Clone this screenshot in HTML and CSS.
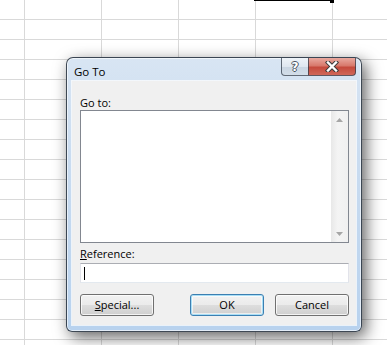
FILE: index.html
```html
<!DOCTYPE html>
<html lang="en">
<head>
    <meta charset="UTF-8">
    <title>Go To</title>
    <link rel="stylesheet" href="styles.css">
</head>
<body>
    <div class="sel-edge"></div>

    <div class="dialog">
        <div class="titlebar">
            <span class="title">Go To</span>
            <div class="cap-btn help"><span>?</span></div>
            <div class="cap-btn close">
                <svg width="14" height="11" viewBox="0 0 14 11">
                    <path d="M3 1.5 L11 9.5 M11 1.5 L3 9.5" stroke="#3b3b3b" stroke-width="4.4" stroke-linecap="square"/>
                    <path d="M3 1.5 L11 9.5 M11 1.5 L3 9.5" stroke="#ffffff" stroke-width="2.4" stroke-linecap="square"/>
                </svg>
            </div>
        </div>

        <div class="client">
            <div class="lbl">Go to:</div>
            <div class="listbox">
                <div class="list-items"></div>
                <div class="vscroll">
                    <div class="sb-arrow">
                        <svg width="7" height="4" viewBox="0 0 7 4"><polygon points="0,4 3.5,0 7,4" fill="#a6a6a6"/></svg>
                    </div>
                    <div class="sb-track"></div>
                    <div class="sb-arrow">
                        <svg width="7" height="4" viewBox="0 0 7 4"><polygon points="0,0 7,0 3.5,4" fill="#a6a6a6"/></svg>
                    </div>
                </div>
            </div>

            <div class="lbl ref-lbl"><u>R</u>eference:</div>
            <div class="textbox"><span class="caret"></span></div>

            <div class="btn-row">
                <button class="btn"><u>S</u>pecial...</button>
                <button class="btn default ok">OK</button>
                <button class="btn">Cancel</button>
            </div>
        </div>
    </div>
</body>
</html>
```

FILE: styles.css
```css
*{
    margin: 0;
    padding: 0;
    box-sizing: border-box;
}
html, body{
    width: 387px;
    height: 345px;
    overflow: hidden;
}
body{
    position: relative;
    background-color: #ffffff;
    background-image:
        linear-gradient(to right, #d9d9d9 1px, transparent 1px),
        linear-gradient(to bottom, #d9d9d9 1px, transparent 1px);
    background-size: 77px 20px;
    background-position: 24px 19px;
    font-family: "Open Sans", "Noto Sans", "Liberation Sans", sans-serif;
    font-size: 11px;
    color: #000000;
}

/* active cell border peeking in at the top */
.sel-edge{
    position: absolute;
    left: 254px;
    top: 0;
    width: 77px;
    height: 1px;
    background: #000000;
}
.sel-edge::after{
    content: "";
    position: absolute;
    left: 76px;
    top: 0;
    width: 4px;
    height: 3px;
    background: #000000;
}

/* window */
.dialog{
    position: absolute;
    left: 66px;
    top: 57px;
    width: 296px;
    height: 275px;
    display: flex;
    flex-direction: column;
    border: 1px solid rgba(35, 45, 55, 0.85);
    border-radius: 7px 7px 6px 6px;
    background: linear-gradient(to bottom, #d8e5f3 0%, #cadcf0 35%, #b8d2ee 100%);
    box-shadow: 4px 5px 16px rgba(0, 0, 0, 0.62), inset 0 0 0 1px rgba(255, 255, 255, 0.6);
}
.titlebar{
    height: 23px;
    display: flex;
    align-items: flex-start;
    padding-left: 7px;
    padding-right: 5px;
}
.title{
    flex: 1;
    padding-top: 6px;
    line-height: 15px;
    font-size: 11.5px;
    color: #000000;
}
.cap-btn{
    height: 18px;
    display: flex;
    align-items: center;
    justify-content: center;
    border: 1px solid rgba(50, 60, 75, 0.75);
    border-top: none;
}
.help{
    width: 27px;
    border-right: none;
    border-radius: 0 0 0 4px;
    background: linear-gradient(to bottom, #eef3f8 0%, #dfe7f0 50%, #c9d5e2 51%, #d3dee9 100%);
}
.help span{
    font-family: "DejaVu Sans", sans-serif;
    font-weight: bold;
    font-size: 12px;
    line-height: 12px;
    color: #ffffff;
    text-shadow: 1px 0 0 #4a5360, -1px 0 0 #4a5360, 0 1px 0 #4a5360, 0 -1px 0 #4a5360;
}
.close{
    width: 48px;
    border-radius: 0 0 4px 0;
    background: linear-gradient(to bottom, #e9a99f 0%, #d8796c 45%, #c54a3c 55%, #d0685a 100%);
}

/* client area */
.client{
    flex: 1;
    margin: 0 5px 6px 5px;
    background: #f0f0f0;
    box-shadow: 0 0 0 1px rgba(255, 255, 255, 0.7);
    display: flex;
    flex-direction: column;
    padding: 14px 7px 0 8px;
}
.lbl{
    line-height: 15px;
    height: 15px;
}
.listbox{
    height: 133px;
    display: flex;
    border: 1px solid #828790;
    background: #ffffff;
}
.list-items{
    flex: 1;
}
.vscroll{
    width: 17px;
    display: flex;
    flex-direction: column;
    background: linear-gradient(to right, #e8e8e8, #f4f4f4 40%, #f0f0f0);
}
.sb-arrow{
    height: 17px;
    display: flex;
    align-items: center;
    justify-content: center;
}
.sb-track{
    flex: 1;
}
.ref-lbl{
    margin-top: 3px;
}
.textbox{
    height: 20px;
    margin-top: 2px;
    border: 1px solid #e2e3ea;
    border-top-color: #abadb3;
    border-bottom-color: #e3e9ef;
    background: #ffffff;
    padding: 3px 0 0 3px;
}
.caret{
    display: block;
    width: 1px;
    height: 13px;
    background: #000000;
}
.btn-row{
    display: flex;
    margin-top: 11px;
    gap: 11px;
}
.btn{
    width: 74px;
    height: 22px;
    border: 1px solid #707070;
    border-radius: 3px;
    background: linear-gradient(to bottom, #f2f2f2 0%, #ebebeb 50%, #dddddd 51%, #cfcfcf 100%);
    box-shadow: inset 0 0 0 1px rgba(255, 255, 255, 0.75);
    font-family: inherit;
    font-size: 11px;
    color: #000000;
    line-height: 18px;
}
.ok{
    margin-left: auto;
}
.default{
    border-color: #3c7fb1;
    box-shadow: inset 0 0 0 1px #a8def6, inset 0 0 0 2px rgba(255, 255, 255, 0.6);
}
```
